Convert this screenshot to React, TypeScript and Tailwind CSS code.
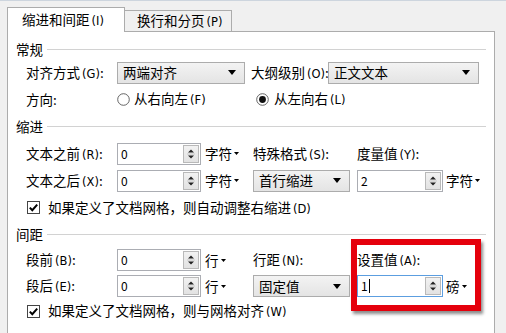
import React from 'react';

const font = { fontFamily: '"Noto Sans CJK SC", "Noto Sans", sans-serif' };
const keyFont = { fontFamily: '"DejaVu Sans", "Liberation Sans", sans-serif' };

const DropArrow = () => (
  <svg width="8" height="5" viewBox="0 0 8 5" className="shrink-0">
    <path d="M0 0H8L4 5Z" fill="#000" />
  </svg>
);

const SmallCaret = () => (
  <svg width="5" height="3" viewBox="0 0 5 3" className="shrink-0 ml-[2px]">
    <path d="M0 0H5L2.5 3Z" fill="#000" />
  </svg>
);

// label text with access key, e.g. 对齐方式 (G):
const Label = ({ text, k, colon = true }: { text: string; k: string; colon?: boolean }) => (
  <span className="whitespace-nowrap">
    {text}
    <span className="ml-[2px] text-[11.5px]" style={keyFont}>
      ({k})
    </span>
    {colon && <span>:</span>}
  </span>
);

const Select = ({ value, width }: { value: string; width: string }) => (
  <div
    className={`${width} h-[22px] flex items-center justify-between pl-[5px] pr-[8px] border border-[#acacac] bg-gradient-to-b from-[#f3f3f3] to-[#e4e4e4]`}
  >
    <span>{value}</span>
    <DropArrow />
  </div>
);

const SpinBox = ({ value, width, focused }: { value: string; width: string; focused?: boolean }) => (
  <div
    className={`${width} h-[22px] flex bg-white border ${focused ? 'border-[#5c9ee0]' : 'border-[#abadb3]'}`}
  >
    <div className="flex-1 flex items-center pl-[3px] text-[12px]">
      <span>{value}</span>
      {focused && <span className="w-px h-[14px] bg-black ml-[1px]" />}
    </div>
    <div className="w-[16px] my-[1px] mr-[1px] border border-[#b9b9b9] bg-gradient-to-b from-[#f2f2f2] to-[#e2e2e2] flex items-center justify-center">
      <svg width="8" height="12" viewBox="0 0 8 12">
        <path d="M1 4.5L4 1.5L7 4.5Z" fill="#222" />
        <path d="M1 7.5L4 10.5L7 7.5Z" fill="#222" />
        <path d="M0 6H8" stroke="#c8c8c8" strokeWidth="1" />
      </svg>
    </div>
  </div>
);

const Unit = ({ text }: { text: string }) => (
  <span className="flex items-center">
    {text}
    <SmallCaret />
  </span>
);

const Header = ({ text, h }: { text: string; h: string }) => (
  <div className={`${h} flex items-center pl-[8px] pr-[8px] gap-[4px]`}>
    <span>{text}</span>
    <div className="flex-1 h-px bg-[#d2d2d2]" />
  </div>
);

const Radio = ({ checked }: { checked?: boolean }) => (
  <svg width="13" height="13" viewBox="0 0 13 13" className="shrink-0">
    <circle cx="6.5" cy="6.5" r="5.8" fill="#fff" stroke="#555" strokeWidth="0.9" />
    {checked && <circle cx="6.5" cy="6.5" r="3.4" fill="#111" />}
  </svg>
);

const Checkbox = () => (
  <svg width="13" height="13" viewBox="0 0 13 13" className="shrink-0">
    <rect x="0.5" y="0.5" width="12" height="12" fill="#fff" stroke="#444" />
    <path d="M2.8 6.6L5.3 9.2L10.2 3.6" fill="none" stroke="#000" strokeWidth="2" />
  </svg>
);

export default function App() {
  return (
    <div
      className="relative w-[506px] h-[333px] overflow-hidden bg-[#f0f0f0] border-t border-[#cdd5de] text-[13.5px] text-black pt-[6px]"
      style={font}
    >
      {/* tabs */}
      <div className="h-[24px] pl-[7px] flex items-end">
        <div className="relative z-10 -mb-px w-[118px] h-[25px] bg-white border-l border-t border-r border-[#acacac] flex items-center pl-[14px]">
          <Label text="缩进和间距" k="I" colon={false} />
        </div>
        <div className="w-[107px] h-[21px] bg-[#f0f0f0] border-t border-r border-[#acacac] flex items-center pl-[12px]">
          <Label text="换行和分页" k="P" colon={false} />
        </div>
      </div>

      {/* panel */}
      <div className="ml-[7px] w-[488px] h-[310px] bg-white border border-b-0 border-[#acacac] pt-[6px] flex flex-col">
        <Header text="常规" h="h-[22px]" />

        <div className="h-[25px] flex items-center pl-[18px]">
          <span className="w-[91px]">
            <Label text="对齐方式" k="G" />
          </span>
          <Select value="两端对齐" width="w-[128px]" />
          <span className="w-[83px] pl-[6px]">
            <Label text="大纲级别" k="O" />
          </span>
          <Select value="正文文本" width="w-[151px]" />
        </div>

        <div className="h-[28px] flex items-center pl-[18px]">
          <span className="w-[91px]">方向:</span>
          <div className="w-[136px] flex items-center gap-[4px]">
            <Radio />
            <Label text="从右向左" k="F" colon={false} />
          </div>
          <div className="flex items-center gap-[5px] pl-[3px]">
            <Radio checked />
            <Label text="从左向右" k="L" colon={false} />
          </div>
        </div>

        <Header text="缩进" h="h-[27px]" />

        <div className="h-[27px] flex items-center pl-[18px]">
          <span className="w-[91px]">
            <Label text="文本之前" k="R" />
          </span>
          <SpinBox value="0" width="w-[84px]" />
          <div className="w-[52px] pl-[4px]">
            <Unit text="字符" />
          </div>
          <span className="w-[104px]">
            <Label text="特殊格式" k="S" />
          </span>
          <Label text="度量值" k="Y" />
        </div>

        <div className="h-[27px] flex items-center pl-[18px]">
          <span className="w-[91px]">
            <Label text="文本之后" k="X" />
          </span>
          <SpinBox value="0" width="w-[84px]" />
          <div className="w-[52px] pl-[4px]">
            <Unit text="字符" />
          </div>
          <Select value="首行缩进" width="w-[97px]" />
          <div className="ml-[7px]">
            <SpinBox value="2" width="w-[86px]" />
          </div>
          <div className="pl-[3px]">
            <Unit text="字符" />
          </div>
        </div>

        <div className="h-[27px] flex items-center pl-[19px] gap-[8px]">
          <Checkbox />
          <Label text="如果定义了文档网格，则自动调整右缩进" k="D" colon={false} />
        </div>

        <Header text="间距" h="h-[26px]" />

        <div className="h-[26px] flex items-center pl-[18px]">
          <span className="w-[91px]">
            <Label text="段前" k="B" />
          </span>
          <SpinBox value="0" width="w-[84px]" />
          <div className="w-[52px] pl-[4px]">
            <Unit text="行" />
          </div>
          <span className="w-[104px]">
            <Label text="行距" k="N" />
          </span>
          <Label text="设置值" k="A" />
        </div>

        <div className="h-[26px] flex items-center pl-[18px]">
          <span className="w-[91px]">
            <Label text="段后" k="E" />
          </span>
          <SpinBox value="0" width="w-[84px]" />
          <div className="w-[52px] pl-[4px]">
            <Unit text="行" />
          </div>
          <Select value="固定值" width="w-[97px]" />
          <div className="ml-[7px]">
            <SpinBox value="1" width="w-[86px]" focused />
          </div>
          <div className="pl-[3px]">
            <Unit text="磅" />
          </div>
        </div>

        <div className="h-[24px] flex items-center pl-[19px] gap-[8px]">
          <Checkbox />
          <Label text="如果定义了文档网格，则与网格对齐" k="W" colon={false} />
        </div>
      </div>

      {/* red highlight */}
      <div className="absolute left-[351px] top-[238px] w-[130px] h-[72px] border-[6px] border-[#e5000c] shadow-[2px_3px_3px_rgba(0,0,0,0.45)]" />
    </div>
  );
}
